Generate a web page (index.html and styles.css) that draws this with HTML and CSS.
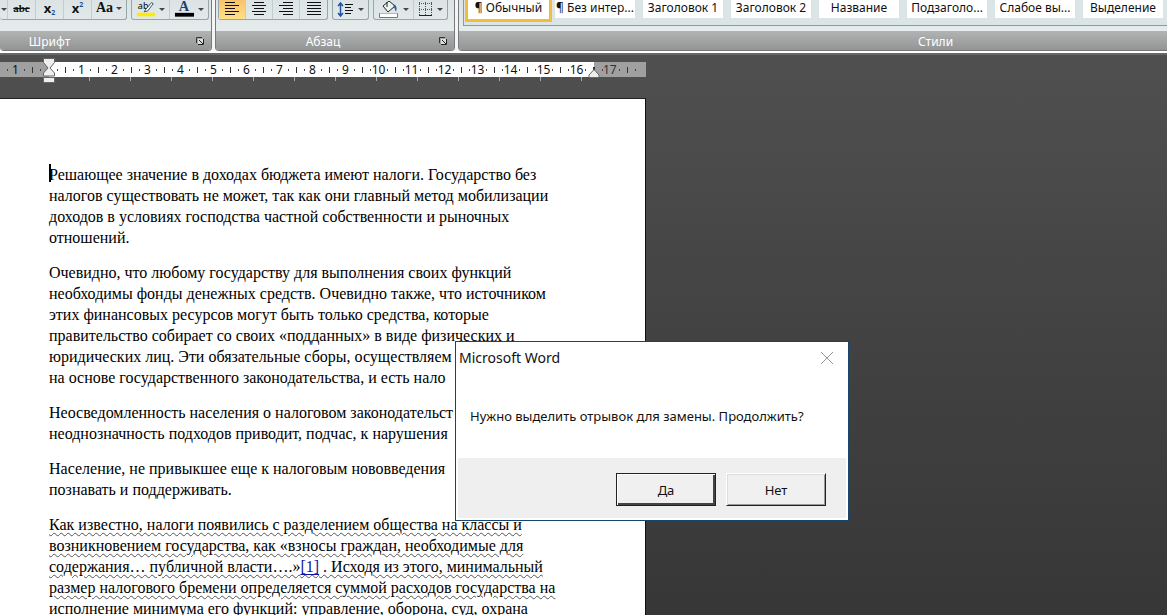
FILE: index.html
```html
<!DOCTYPE html>
<html lang="ru">
<head>
<meta charset="utf-8">
<title>Microsoft Word</title>
<link rel="stylesheet" href="styles.css">
</head>
<body>
<div class="app">
  <header class="ribbon">
    <section class="group group-font">
      <div class="tools">
        <div class="toolset toolset-first">
          <button class="tool tool-arrow" aria-label="Подчёркнутый"><i class="caret"></i></button>
          <button class="tool strike" aria-label="Зачёркнутый">abc</button>
          <button class="tool glyph" aria-label="Подстрочный">x<sub>2</sub></button>
          <button class="tool glyph" aria-label="Надстрочный">x<sup>2</sup></button>
          <button class="tool case" aria-label="Регистр">Aa<i class="caret"></i></button>
        </div>
        <div class="toolset">
          <button class="tool color" aria-label="Цвет выделения текста">
            <svg width="22" height="19" viewBox="0 0 22 19"><text x="2" y="9" font-family="Noto Sans" font-size="10">ab</text><path d="M11 9 17 2l2 1-6 8-4 1z" fill="#fff" stroke="#24466b"/><path d="M1 13h20v4H1z" fill="#ffeb00"/></svg>
            <i class="caret"></i>
          </button>
          <button class="tool color" aria-label="Цвет текста">
            <svg width="22" height="19" viewBox="0 0 22 19"><text x="5" y="11" font-family="Liberation Serif" font-weight="bold" font-size="15" fill="#1f3f77">A</text><path d="M1 13h20v4H1z" fill="#000"/></svg>
            <i class="caret"></i>
          </button>
        </div>
      </div>
      <footer class="caption"><span>Шрифт</span><button class="launcher" aria-label="Параметры шрифта"><svg width="10" height="10" viewBox="0 0 10 10"><path d="M1.500 7V1.500H7" fill="none" stroke="#333"/><path d="M3 3h6v6H3z" fill="#ddd"/><path d="M4 4l4 4M8.500 3v5.500H3" fill="none" stroke="#222"/></svg></button></footer>
    </section>
    <section class="group group-paragraph">
      <div class="tools">
        <div class="toolset">
          <button class="tool align active" aria-label="По левому краю"><svg width="16" height="14" viewBox="0 0 16 14"><path d="M1 .5h10M1 3.500h14M1 6.500h10M1 9.500h14M1 12.500h10" stroke="#111"/></svg></button>
          <button class="tool align" aria-label="По центру"><svg width="16" height="14" viewBox="0 0 16 14"><path d="M3 .5h10M1 3.500h14M3 6.500h10M1 9.500h14M3 12.500h10" stroke="#111"/></svg></button>
          <button class="tool align" aria-label="По правому краю"><svg width="16" height="14" viewBox="0 0 16 14"><path d="M5 .5h10M1 3.500h14M5 6.500h10M1 9.500h14M5 12.500h10" stroke="#111"/></svg></button>
          <button class="tool align" aria-label="По ширине"><svg width="16" height="14" viewBox="0 0 16 14"><path d="M1 .5h14M1 3.500h14M1 6.500h14M1 9.500h14M1 12.500h14" stroke="#111"/></svg></button>
        </div>
        <div class="toolset">
          <button class="tool" aria-label="Интервал"><svg width="18" height="16" viewBox="0 0 18 16"><path d="M3.500 1v13M1 4l2.500-3L6 4M1 11l2.500 3L6 11" fill="none" stroke="#2450a0" stroke-width="1.500"/><path d="M8 2.500h8M8 5.500h6M8 8.500h8M8 11.500h6" stroke="#111"/></svg><i class="caret"></i></button>
        </div>
        <div class="toolset">
          <button class="tool" aria-label="Заливка"><svg width="22" height="18" viewBox="0 0 22 18"><path d="M5 5 11 0l6 5-7 6z" fill="#eef3f5" stroke="#222"/><path d="M9 1v5" stroke="#222"/><path d="M15 3q5 1 3 8l-2-5z" fill="#2a5a91"/><path d="M1.500 12.500h18v4h-18z" fill="#fff" stroke="#777"/><path d="M2 12.500h17" stroke="#d6c332"/></svg><i class="caret"></i></button>
          <button class="tool" aria-label="Границы"><svg width="16" height="16" viewBox="0 0 16 16"><path d="M1.500 0v13M7.500 0v13M13.500 0v13M1 1.500h13M1 7.500h13" stroke="#555" stroke-dasharray="1 1"/><path d="M1 13.500h13" stroke="#222"/></svg><i class="caret"></i></button>
        </div>
      </div>
      <footer class="caption"><span>Абзац</span><button class="launcher" aria-label="Параметры абзаца"><svg width="10" height="10" viewBox="0 0 10 10"><path d="M1.500 7V1.500H7" fill="none" stroke="#333"/><path d="M3 3h6v6H3z" fill="#ddd"/><path d="M4 4l4 4M8.500 3v5.500H3" fill="none" stroke="#222"/></svg></button></footer>
    </section>
    <section class="group group-styles">
      <div class="gallery">
        <button class="style selected">¶ Обычный</button>
        <button class="style">¶ Без интер...</button>
        <button class="style">Заголовок 1</button>
        <button class="style">Заголовок 2</button>
        <button class="style">Название</button>
        <button class="style">Подзаголо...</button>
        <button class="style">Слабое вы...</button>
        <button class="style">Выделение</button>
      </div>
      <footer class="caption"><span>Стили</span></footer>
    </section>
  </header>

  <main class="workspace">
    <div class="ruler">
      <div class="margin-left">1</div>
      <ol class="scale">
        <li>1</li><li>2</li><li>3</li><li>4</li><li>5</li><li>6</li><li>7</li><li>8</li>
        <li>9</li><li>10</li><li>11</li><li>12</li><li>13</li><li>14</li><li>15</li><li>16</li>
      </ol>
      <div class="margin-right">17</div>
      <svg class="indent" width="12" height="26" viewBox="0 0 12 26"><path d="M.5.500h11v4L7 10l4.500 5v3H.5v-3L5 10 .5 4.500z" fill="#eee" stroke="#666"/><path d="M.5 19.500h11v5H.5z" fill="#eee" stroke="#666"/></svg>
      <svg class="indent-right" width="12" height="9" viewBox="0 0 12 9"><path d="M6 .5 11 6v2.500H1V6z" fill="#eee" stroke="#666"/></svg>
    </div>
    <div class="tabs"></div>
    <article class="page">
      <p><span class="cursor"></span>Решающее значение в доходах бюджета имеют налоги. Государство без<br>налогов существовать не может, так как они главный метод мобилизации<br>доходов в условиях господства частной собственности и рыночных<br>отношений.</p>
      <p>Очевидно, что любому государству для выполнения своих функций<br>необходимы фонды денежных средств. Очевидно также, что источником<br>этих финансовых ресурсов могут быть только средства, которые<br>правительство собирает со своих «подданных» в виде физических и<br>юридических лиц. Эти обязательные сборы, осуществляем<br>на основе государственного законодательства, и есть нало</p>
      <p>Неосведомленность населения о налоговом законодательст<br>неоднозначность подходов приводит, подчас, к нарушения</p>
      <p>Население, не привыкшее еще к налоговым нововведения<br>познавать и поддерживать.</p>
      <p class="checked">Как известно, налоги появились с разделением общества на классы и<br>возникновением государства, как «взносы граждан, необходимые для<br>содержания… публичной власти….»<a href="#note">[1]</a> . Исходя из этого, минимальный<br>размер налогового бремени определяется суммой расходов государства на<br>исполнение минимума его функций: управление, оборона, суд, охрана</p>
    </article>
  </main>

  <div class="dialog" role="dialog" aria-labelledby="dialog-title">
    <div class="titlebar"><span id="dialog-title">Microsoft Word</span><button class="close" aria-label="Закрыть"><svg width="14" height="14" viewBox="0 0 14 14"><path d="M1 1l12 12M13 1 1 13" stroke="#999"/></svg></button></div>
    <p class="message">Нужно выделить отрывок для замены. Продолжить?</p>
    <div class="actions"><button class="answer default">Да</button><button class="answer">Нет</button></div>
  </div>
</div>
</body>
</html>
```
FILE: styles.css
```css
* { box-sizing: border-box; }
body { margin: 0; font-family: "Noto Sans", sans-serif; color: #111; }
button { font: inherit; color: inherit; margin: 0; padding: 0; border: 0; background: none; }
.app { position: relative; display: flex; flex-direction: column; height: 100vh; overflow: hidden; background: linear-gradient(#505050, #4f4f4f 12%, #424242 55%, #373737); }

.ribbon { display: flex; flex: none; gap: 3px; height: 53px; background: #f4f6f6; border-bottom: 2px solid #fff; }
.group { display: flex; flex-direction: column; justify-content: space-between; background: linear-gradient(#dbe3e5, #e6ecec 60%); border: solid #77797b; border-width: 0 1px 1px; border-radius: 0 0 4px 4px; overflow: hidden; }
.group-font { width: 212px; flex: none; border-left: 0; }
.group-paragraph { width: 240px; flex: none; }
/* the styles group continues past the right edge of the window */
.group-styles { flex: 1; min-width: 0; margin-right: -252px; }
.caption { display: flex; align-items: center; height: 19px; padding: 1px 6px 0 0; background: linear-gradient(#b2b4b4, #929495); color: #fff; font-size: 12px; }
.caption span { flex: 1; text-align: center; }
.group-font .caption span { padding-right: 96px; }
.group-paragraph .caption span { padding-right: 8px; }
.launcher { display: flex; }

.tools { display: flex; gap: 4px; padding: 0 2px; }
.group-font .tools { padding: 0; }
.toolset { display: flex; height: 20px; border: 1px solid #9aa5a8; border-top: 0; border-radius: 0 0 3px 3px; }
.toolset-first { border-left: 0; }
.tool { display: flex; align-items: center; justify-content: center; gap: 3px; height: 19px; padding: 0 4px; border-right: 1px solid #c3cccf; }
.tool:last-child { border-right: 0; }
.tool-arrow { width: 8px; padding: 0; }
.strike { width: 28px; padding-bottom: 3px; font: bold 11px "Liberation Serif", serif; text-decoration: line-through; }
.glyph { width: 28px; gap: 0; padding-bottom: 3px; font-size: 13px; line-height: 16px; font-weight: bold; }
.glyph sub, .glyph sup { font-size: 7px; color: #24508f; line-height: 7px; }
.glyph sub { padding-top: 8px; }
.glyph sup { padding-bottom: 8px; }
.case { width: 34px; padding-bottom: 3px; font: bold 14px "Liberation Serif", serif; }
.color { width: 38px; }
.align { width: 27px; padding-bottom: 2px; }
.active { background: linear-gradient(#f8c26a, #ffe08a); }
.caret { border: 3px solid transparent; border-top-color: #444; border-bottom: 0; }

.gallery { display: flex; gap: 8px; height: 26px; margin-left: 4px; padding-left: 1px; border: solid #8f999b; border-width: 0 0 1px 1px; background: #dce5e5; overflow: hidden; }
.style { flex: none; width: 80px; height: 18px; padding-bottom: 2px; background: #fff; font-size: 12px; line-height: 16px; white-space: nowrap; }
.selected { width: 87px; height: 22px; padding-bottom: 3px; border: 3px solid #f2bc3d; border-top: 0; margin-right: -5px; }

.workspace { flex: 1; min-height: 0; border-top: 2px solid #686868; }
.ruler { position: relative; display: flex; height: 15px; margin-top: 7px; font-size: 12px; line-height: 15px; }
.margin-left, .scale, .margin-right { background-color: #fff; background-image: repeating-linear-gradient(90deg, transparent 0 8px, #444 8px 9px, transparent 9px 24px, #444 24px 25px, transparent 25px 33px), repeating-linear-gradient(90deg, transparent 0 16px, #333 16px 17px, transparent 17px 33px); background-size: 100% 2px, 100% 6px; background-repeat: no-repeat; background-position: 0 7px, 0 5px; }
.margin-left { width: 49px; padding-left: 12px; background-color: #a0a0a0; background-position: -17px 7px, -17px 5px; background-size: 66px 2px, 66px 6px; }
.scale { display: flex; width: 545px; margin: 0; padding: 0 0 0 16px; list-style: none; }
.scale li { width: 33px; text-align: center; }
.margin-right { width: 52px; padding-left: 9px; background-color: #a0a0a0; color: #333; background-position: -16px 7px, -16px 5px; background-size: 68px 2px, 68px 6px; }
.indent { position: absolute; left: 43px; top: -4px; }
.indent-right { position: absolute; left: 588px; top: 7px; }
.tabs { width: 594px; height: 4px; background: repeating-linear-gradient(90deg, transparent 0 40px, #aaa 40px 41px) 8px 0 no-repeat; }

.page { width: 646px; height: 100%; margin-top: 17px; padding: 65px 0 0 49px; background: #fff; border-top: 1px solid #222; border-right: 1px solid #111; font: 16px/21px "Liberation Serif", serif; color: #000; white-space: nowrap; }
.page p { margin: 0 0 14px; }
.cursor { position: absolute; width: 2px; height: 18px; background: #000; }
.checked { text-decoration: underline wavy #555 1px; text-underline-offset: 2px; }
.checked a { color: #1010a0; }

.dialog { position: absolute; left: 455px; top: 341px; width: 394px; border: 1px solid #17456f; background: #fff; padding: 0 2px 2px; }
.titlebar { display: flex; justify-content: space-between; align-items: center; height: 31px; padding: 0 12px 0 1px; font-size: 14px; }
.close { display: flex; }
.message { margin: 0; padding: 33px 12px 32px; font-size: 13px; line-height: 20px; white-space: nowrap; }
.actions { display: flex; justify-content: flex-end; gap: 10px; padding: 15px 20px 12px; background: #efefef; }
.answer { width: 100px; height: 33px; background: #f0f0f0; border: 1px solid; border-color: #fff #222 #222 #fff; box-shadow: inset 1px 1px #ddd, inset -1px -1px #999; font-size: 13px; }
.default { border-color: #222; box-shadow: inset 1px 1px #fff, inset -2px -2px #444; }
```
